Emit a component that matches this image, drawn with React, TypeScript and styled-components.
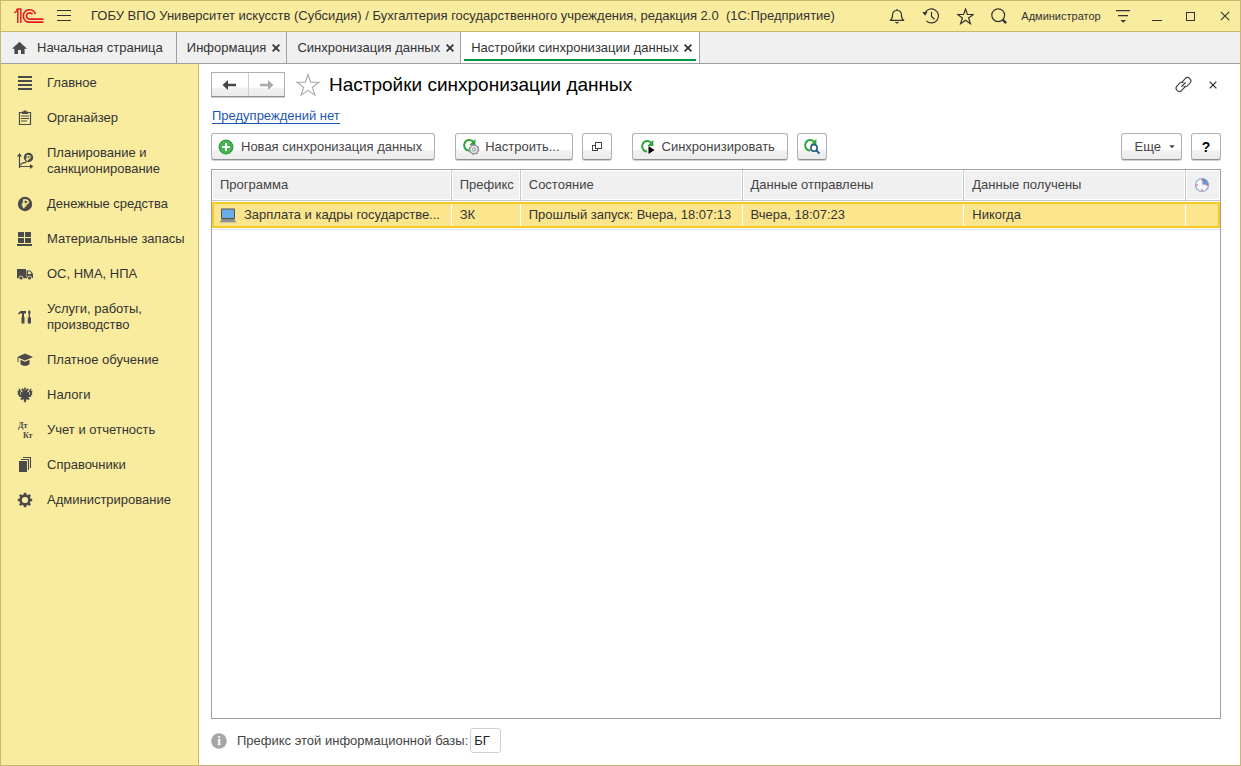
import React from "react";
import styled, { createGlobalStyle, css } from "styled-components";

const GlobalStyle = createGlobalStyle`
  *, *::before, *::after { box-sizing: border-box; }
  body {
    margin: 0;
    font-family: "Liberation Sans", Arial, sans-serif;
    font-size: 13px;
    line-height: 16px;
    color: #333;
    background: #fff;
  }
  button, input { font: inherit; color: inherit; }
  svg { display: block; flex: none; }
`;

const AppWindow = styled.div`
  display: flex;
  flex-direction: column;
  min-height: 100vh;
  border: 1px solid #c9b870;
`;

const bareButton = css`
  display: flex;
  align-items: center;
  justify-content: center;
  padding: 0;
  border: 0;
  background: none;
  cursor: pointer;
`;

/* ---------- title bar ---------- */

const TitleBar = styled.header`
  display: flex;
  align-items: center;
  gap: 4px;
  height: 31px;
  padding-left: 12px;
  background: #faec9e;
  border-bottom: 1px solid #c9b870;
`;

const IconButton = styled.button`
  ${bareButton}
  width: 30px;
  height: 30px;
`;

const WindowTitle = styled.div`
  flex: 1;
  min-width: 0;
  padding-left: 8px;
  white-space: pre;
  overflow: hidden;
  text-overflow: ellipsis;
`;

const UserButton = styled.button`
  ${bareButton}
  width: 86px;
  height: 30px;
  font-size: 11px;
`;

/* ---------- tabs ---------- */

const TabBar = styled.nav`
  display: flex;
  height: 32px;
  background: #f0f0f0;
  border-bottom: 1px solid #a0a0a0;
`;

const Tab = styled.div<{ $active?: boolean }>`
  display: flex;
  align-items: center;
  gap: 4px;
  padding: 0 5px 0 10px;
  border-right: 1px solid #a0a0a0;
  background: ${(p) =>
    p.$active
      ? "linear-gradient(#009646, #009646) 3px 27px / calc(100% - 6px) 2px no-repeat #fff"
      : "transparent"};
`;

const TabButton = styled.button`
  ${bareButton}
  gap: 9px;
  height: 100%;
  white-space: nowrap;
`;

const HomeTab = styled(Tab)`
  padding-right: 13px;
`;

const CloseButton = styled.button`
  ${bareButton}
  width: 11px;
  height: 16px;
`;

/* ---------- body ---------- */

const Body = styled.div`
  display: flex;
  flex: 1;
`;

const Sidebar = styled.nav`
  flex: none;
  width: 198px;
  padding-top: 1px;
  background: #faec9e;
  border-right: 1px solid #c9b870;
`;

const SideLink = styled.a`
  display: flex;
  align-items: center;
  gap: 13px;
  padding: 10px 12px 9px 15px;
  color: #333;
  text-decoration: none;
  svg {
    margin: -1px 0;
  }
`;

const Main = styled.main`
  display: flex;
  flex: 1;
  flex-direction: column;
  min-width: 0;
  padding: 8px 19px 12px 12px;
`;

const PageHeader = styled.div`
  display: flex;
  align-items: center;
  height: 25px;
`;

const raised = css`
  background: linear-gradient(#fff 0, #fff 60%, #f1f1f1 68%, #ececec 100%);
  border: 1px solid #b0b0b0;
  border-bottom-color: #8e8e8e;
  box-shadow: 0 1px 0 #d0d0d0;
`;

const NavGroup = styled.div`
  ${raised}
  display: flex;
  width: 74px;
  height: 25px;
`;

const NavButton = styled.button`
  ${bareButton}
  flex: 1;
  & + & {
    border-left: 1px solid #cfcfcf;
  }
`;

const StarButton = styled.button`
  ${bareButton}
  width: 24px;
  margin: 0 9px 0 11px;
`;

const PageTitle = styled.h1`
  flex: 1;
  margin: 0;
  font-size: 19px;
  line-height: 24px;
  font-weight: 400;
  color: #000;
`;

const HeaderActions = styled.div`
  display: flex;
  gap: 14px;
`;

const HeaderAction = styled.button`
  ${bareButton}
  width: 16px;
  height: 24px;
`;

const WarningLink = styled.a`
  align-self: flex-start;
  margin: 12px 0 9px 1px;
  color: #1d56b0;
  text-decoration: none;
  border-bottom: 1px solid #1d56b0;
  line-height: 14px;
`;

const Toolbar = styled.div`
  display: flex;
  align-items: center;
  margin-bottom: 9px;
`;

const ToolGroup = styled.div<{ $push?: boolean }>`
  display: flex;
  gap: 9px;
  margin-right: ${(p) => (p.$push ? "auto" : "20px")};
  &:last-child {
    margin-right: 0;
  }
`;

const ToolButton = styled.button<{ $square?: boolean }>`
  ${bareButton}
  ${raised}
  gap: 7px;
  height: 27px;
  width: ${(p) => (p.$square ? "30px" : "auto")};
  padding: ${(p) => (p.$square ? "0" : "0 12px 0 6px")};
  border-radius: 3px;
  color: #444;
  white-space: nowrap;
`;

const MoreButton = styled(ToolButton)`
  gap: 8px;
  padding: 0 6px 0 13px;
`;

const HelpButton = styled(ToolButton)`
  color: #000;
  font-size: 14px;
  font-weight: 700;
`;

/* ---------- table ---------- */

const TableBox = styled.div`
  flex: 1;
  border: 1px solid #a0a0a0;
`;

const Table = styled.table`
  width: 100%;
  table-layout: fixed;
  border-collapse: separate;
  border-spacing: 0;
`;

const HeadCell = styled.th<{ $width?: string }>`
  width: ${(p) => p.$width ?? "auto"};
  height: 32px;
  padding: 0 8px 2px;
  background: #f0f0f0;
  border-right: 1px solid #c8c8c8;
  border-bottom: 1px solid #fff;
  box-shadow: inset 0 -1px 0 #c8c8c8, inset 0 -2px 0 #fff, inset 0 0 0 1px #fff;
  font-weight: 400;
  text-align: left;
  color: #444;
  white-space: nowrap;
  &:last-child {
    border-right: 0;
  }
`;

const SelectedRow = styled.tr`
  outline: 2px solid #fbc926;
  outline-offset: -2px;
`;

const Cell = styled.td`
  height: 26px;
  padding: 0 8px;
  background: #fce68d;
  border-right: 1px solid #fff;
  white-space: nowrap;
  &:last-child {
    border-right: 0;
  }
`;

const Program = styled.div`
  display: flex;
  align-items: center;
  gap: 8px;
`;

const RowGap = styled.td`
  height: 2px;
  padding: 0;
  border-bottom: 1px solid #e4e4e4;
`;

/* ---------- footer ---------- */

const Footer = styled.div`
  display: flex;
  align-items: center;
  margin-top: 9px;
`;

const FooterLabel = styled.label`
  margin: 0 2px 0 10px;
  color: #444;
`;

const PrefixInput = styled.input`
  width: 31px;
  height: 25px;
  padding: 0 3px;
  border: 1px solid #d0d0d0;
  border-radius: 3px;
  background: #fff;
  color: #222;
`;

/* ---------- icons ---------- */

const INK = "#4a4a4a";

const Logo = () => (
  <svg width="32" height="16" viewBox="0 0 32 16" fill="none" stroke="#e31b23" strokeWidth="1.7" role="img" aria-label="1С">
    <path d="M1.2 5 4.8 2.2V15M3.3 2 4.9 1H7.8V15" strokeWidth="1.5" />
    <path d="M22.4 6A6.2 6.2 0 1 0 16.4 14.2H30.5" />
    <path d="M19.4 6.4A3.2 3.2 0 1 0 16.4 11.2H30.5" />
  </svg>
);

const Burger = () => (
  <svg width="16" height="14" viewBox="0 0 16 14" fill="#333" shapeRendering="crispEdges">
    <path d="M1 1h14v1H1zM1 6h14v1H1zM1 11h14v1H1z" />
  </svg>
);

const Bell = () => (
  <svg width="16" height="16" viewBox="0 0 16 16" fill="none" stroke="#333" strokeWidth="1.2" strokeLinejoin="round">
    <path d="M8 1v1.4M1.2 12.4c2-1.4 2.4-3 2.4-5.6 0-2.6 1.9-4.3 4.4-4.3s4.4 1.7 4.4 4.3c0 2.6.4 4.2 2.4 5.6z" />
    <path d="M5.6 14h4.8L8 15.7z" fill="#333" stroke="none" />
  </svg>
);

const History = () => (
  <svg width="18" height="16" viewBox="0 0 18 16" fill="none" stroke="#333" strokeWidth="1.2">
    <path d="M3 5.2A7 7 0 1 1 4.4 12.8M9.5 3.8v4.7l3 2.8" />
    <path d="M.3 4.3 5.6 3.8 3.2 7.8z" fill="#333" stroke="none" />
  </svg>
);

const Star = ({ size, color }: { size: number; color: string }) => (
  <svg width={size} height={size} viewBox="0 0 24 24" fill="none" stroke={color} strokeWidth={size > 20 ? 1.1 : 1.7}>
    <path d="M12 1.5 14.7 9.2H23L16.4 14.1 18.9 22.2 12 17.4 5.1 22.2 7.6 14.1 1 9.2H9.3z" />
  </svg>
);

const Search = () => (
  <svg width="16" height="16" viewBox="0 0 16 16" fill="none" stroke="#333">
    <circle cx="7.2" cy="7.2" r="6.4" strokeWidth="1.2" />
    <path d="m11.5 11.5 3.6 3.6" strokeWidth="2.4" />
  </svg>
);

const MenuLines = () => (
  <svg width="15" height="14" viewBox="0 0 15 14" fill="#333">
    <path d="M0 1h14v1.2H0zM2 6h10v1.2H2zM4.5 11h5.5L7.2 13.7z" />
  </svg>
);

const Minimize = () => (
  <svg width="10" height="10" viewBox="0 0 10 10" shapeRendering="crispEdges">
    <path d="M0 9h10v1H0z" fill="#333" />
  </svg>
);

const Maximize = () => (
  <svg width="10" height="10" viewBox="0 0 10 10" shapeRendering="crispEdges">
    <path d="M.5 1.5h8v8h-8z" fill="none" stroke="#333" />
  </svg>
);

const Cross = ({ size, weight }: { size: number; weight: number }) => (
  <svg width={size} height={size} viewBox="0 0 10 10" fill="none" stroke="#333" strokeWidth={weight}>
    <path d="m.8.8 8.4 8.4M9.2.8.8 9.2" />
  </svg>
);

const Home = () => (
  <svg width="17" height="14" viewBox="0 0 17 14" fill={INK}>
    <path d="M8.5.8 16 7.8H13.6V13H10V9H7V13H3.4V7.8H1z" />
  </svg>
);

const Arrow = ({ color, flip }: { color: string; flip?: boolean }) => (
  <svg width="15" height="10" viewBox="0 0 15 10" fill={color}>
    <path d={flip ? "M14.5 5 9 0V3.7H1V6.3H9V10z" : "M.5 5 6 0V3.7H14V6.3H6V10z"} />
  </svg>
);

const Chain = () => (
  <svg width="17" height="17" viewBox="0 0 24 24" fill="none" stroke="#444" strokeWidth="1.7" strokeLinecap="round">
    <path d="M9.5 9 14.5 3.6a4.6 4.6 0 0 1 6.6 6.4l-3.8 3.9a4.5 4.5 0 0 1-4.6 1" />
    <path d="M14.5 15 9.5 20.4a4.6 4.6 0 0 1-6.6-6.4l3.8-3.9a4.5 4.5 0 0 1 4.6-1M9.5 14.5 14.5 9.5" />
  </svg>
);

const PlusCircle = () => (
  <svg width="16" height="16" viewBox="0 0 16 16">
    <circle cx="8" cy="8" r="7" fill="#44b54e" stroke="#23903a" />
    <path d="M7 4h2v3h3v2H9v3H7V9H4V7h3z" fill="#fff" />
  </svg>
);

const syncArc = (
  <>
    <path d="M11.8 4.4A5.3 5.3 0 1 0 7 12.6" fill="none" stroke="#2da53a" strokeWidth="2" />
    <path d="M13.4 1v6H7.4z" fill="#2da53a" />
  </>
);

const SyncGear = () => (
  <svg width="16" height="17" viewBox="0 0 16 17" overflow="visible">
    {syncArc}
    <circle cx="12" cy="11.5" r="4.3" fill="#e4e4e4" stroke="#8b8f94" strokeWidth="1.2" />
    <circle cx="12" cy="11.5" r="4.7" fill="none" stroke="#8b8f94" strokeWidth="1.3" strokeDasharray="1.8 1.89" />
    <circle cx="12" cy="11.5" r="1.5" fill="#fff" stroke="#8b8f94" />
  </svg>
);

const SyncPlay = () => (
  <svg width="16" height="17" viewBox="0 0 16 17">
    <g transform="translate(1 1)">{syncArc}</g>
    <path d="M9.5 8v8l6-4z" fill="#000" />
  </svg>
);

const SyncSearch = () => (
  <svg width="17" height="17" viewBox="0 0 17 17" overflow="visible">
    {syncArc}
    <circle cx="11" cy="10" r="3.2" fill="#fff" stroke="#235a86" strokeWidth="1.6" />
    <path d="m13.3 12.4 3.2 3.2" stroke="#235a86" strokeWidth="2" />
  </svg>
);

const Windows = () => (
  <svg width="10" height="10" viewBox="0 0 10 10" fill="none" stroke="#444" shapeRendering="crispEdges">
    <path d="M3.5.5h6v6h-6zM3 3.5H.5v5h5V7" />
  </svg>
);

const Caret = () => (
  <svg width="6" height="4" viewBox="0 0 6 4">
    <path d="M.3.3h5.4L3 3.2z" fill="#444" />
  </svg>
);

const Clock = () => (
  <svg width="16" height="16" viewBox="0 0 16 16">
    <circle cx="8" cy="8" r="6.5" fill="#f4f8fd" stroke="#8fa9d3" strokeWidth="1.2" />
    <path d="M8 8V1.5A6.5 6.5 0 0 1 14.5 8z" fill="#7590cb" />
    <path d="M8 3v5h4" fill="none" stroke="#dfe8f6" />
    <path d="M7.3 12.3h1.4v1.4H7.3zM2.3 7.3h1.4v1.4H2.3zM7.3 2.3h1.4v1.4H7.3zM12.3 7.3h1.4v1.4h-1.4z" fill="#e0604c" />
  </svg>
);

const Laptop = () => (
  <svg width="16" height="15" viewBox="0 0 16 15">
    <path d="M1.5 1h13v9.5h-13z" fill="#69aee8" stroke="#55504b" />
    <path d="M1.5 11h13L16 13.5V14.5H0V13.5z" fill="#9a9a9a" />
    <path d="M2 11.5h12v1H2z" fill="#777" />
  </svg>
);

const Info = () => (
  <svg width="16" height="16" viewBox="0 0 16 16" aria-hidden="true">
    <circle cx="8" cy="8" r="7.8" fill="#a6a6a6" />
    <text x="8" y="12" fontFamily="Liberation Serif, serif" fontWeight="700" fontSize="13" textAnchor="middle" fill="#fff">i</text>
  </svg>
);

const SideIcon = ({ children }: { children: React.ReactNode }) => (
  <svg width="18" height="18" viewBox="0 0 18 18" fill={INK} aria-hidden="true">
    {children}
  </svg>
);

const sections: { label: string; icon: React.ReactNode }[] = [
  { label: "Главное", icon: <path d="M2 2h14v2H2zM2 6h14v2H2zM2 10h14v2H2zM2 14h14v2H2z" shapeRendering="crispEdges" /> },
  {
    label: "Органайзер",
    icon: (
      <>
        <path d="M3.5 3.5h11v12h-11z" fill="none" stroke={INK} strokeWidth="1.2" />
        <path d="M6 2.5h1.6V1.5h2.8v1h1.6V5H6zM5 6.5h8v1H5zM5 9h8v1H5zM5 11.5h6v1H5z" />
      </>
    ),
  },
  {
    label: "Планирование и санкционирование",
    icon: (
      <>
        <path d="M3.5 3v13M3 14.5h13" fill="none" stroke={INK} strokeWidth="1.2" />
        <path d="M3.5 1 6 4.5H1zM17.5 14.5 14 12v5z" />
        <path d="M4 13 6.5 11l3-.5 2-2" fill="none" stroke={INK} strokeWidth="1.3" />
        <circle cx="12.5" cy="5.5" r="4.7" />
        <text x="12.5" y="8.500" fontFamily="Liberation Sans, sans-serif" fontWeight="700" fontSize="8" textAnchor="middle" fill="#faec9e">₽</text>
      </>
    ),
  },
  {
    label: "Денежные средства",
    icon: (
      <>
        <circle cx="9" cy="9" r="7.2" />
        <text x="9" y="13" fontFamily="Liberation Sans, sans-serif" fontWeight="700" fontSize="12" textAnchor="middle" fill="#faec9e">₽</text>
      </>
    ),
  },
  { label: "Материальные запасы", icon: <path d="M2 2h6v5H2zM9 2h6v5H9zM2 8h6v5H2zM9 8h6v5H9zM1 14h15v2H1z" shapeRendering="crispEdges" /> },
  {
    label: "ОС, НМА, НПА",
    icon: (
      <>
        <path d="M1 4h9v8H1zM10.5 5.5h4L17 9v4h-6.5zM1 12h12v1.2H1z" />
        <path d="M12 6.5h2L15.5 9H12z" fill="#faec9e" />
        <circle cx="5" cy="13" r="2" stroke="#faec9e" strokeWidth=".8" />
        <circle cx="13.5" cy="13" r="2" stroke="#faec9e" strokeWidth=".8" />
      </>
    ),
  },
  {
    label: "Услуги, работы, производство",
    icon: <path d="M2 5.500 4.500 3H10v2.500H8V9H8.500v6.500h-3V9H6V5.500H4L3 6.500zM12.500 2.500h1.600l.6 2-.7 1.500v3.500h1V15q0 .8-1.700.8T11.700 15V9.500h1V6L12 4.500z" />,
  },
  {
    label: "Платное обучение",
    icon: <path d="M9 2.500 17 6 9 9.500 2.500 6.700V11H1.500V6zM4.500 8.800 9 10.800l4.500-2v4.500Q11.500 15 9 15t-4.500-1.700z" />,
  },
  {
    label: "Налоги",
    icon: (
      <>
        <path d="M9 1 10 2.5 9.5 4.5 11 2.5 13 3 12 4.5 11 6.5 13 5.5 14 3 15.5 2.5 15 5 16.5 4.5 16 7 16.5 8 15 9.5 15.5 10.5 13.5 11 12 11 14 13 12 14 10.5 13 10 15.5 9 16.8 8 15.5 7.5 13 6 14 4 13 6 11 4.5 11 2.5 10.5 3 9.5 1.5 8 2 7 1.5 4.5 3 5 2.5 2.5 4 3 5 5.5 7 6.5 6 4.5 5 3 7 2.5 8.5 4.5 8 2.5z" />
        <path d="M4.5 6v3M13.5 6v3" fill="none" stroke="#faec9e" strokeWidth=".6" />
      </>
    ),
  },
  {
    label: "Учет и отчетность",
    icon: (
      <g fontFamily="Liberation Serif, serif" fontWeight="700" fontSize="8">
        <text x="2" y="7">Дт</text>
        <text x="7" y="17">Кт</text>
      </g>
    ),
  },
  {
    label: "Справочники",
    icon: (
      <>
        <path d="M3 5h8v11H3z" />
        <path d="M5 3.5h7.5V14M7 1.5h7.5V12" fill="none" stroke={INK} strokeWidth="1.1" />
      </>
    ),
  },
  {
    label: "Администрирование",
    icon: (
      <>
        <circle cx="9" cy="9" r="4.4" fill="none" stroke={INK} strokeWidth="2.6" />
        <path d="M7.7 1.8h2.6V4H7.7zM7.7 14h2.6v2.2H7.7zM1.8 7.7H4v2.6H1.8zM14 7.7h2.2v2.6H14z" />
        <path d="M7.7 1.8h2.6V4H7.7zM7.7 14h2.6v2.2H7.7zM1.8 7.7H4v2.6H1.8zM14 7.7h2.2v2.6H14z" transform="rotate(45 9 9)" />
      </>
    ),
  },
];

const tabs = [
  { label: "Информация", active: false },
  { label: "Синхронизация данных", active: false },
  { label: "Настройки синхронизации данных", active: true },
];

export default function App() {
  return (
    <AppWindow>
      <GlobalStyle />
      <TitleBar>
        <Logo />
        <IconButton aria-label="Меню"><Burger /></IconButton>
        <WindowTitle>
          {"ГОБУ ВПО Университет искусств (Субсидия) / Бухгалтерия государственного учреждения, редакция 2.0  (1С:Предприятие)"}
        </WindowTitle>
        <IconButton aria-label="Уведомления"><Bell /></IconButton>
        <IconButton aria-label="История"><History /></IconButton>
        <IconButton aria-label="Избранное"><Star size={17} color="#333" /></IconButton>
        <IconButton aria-label="Поиск"><Search /></IconButton>
        <UserButton>Администратор</UserButton>
        <IconButton aria-label="Сервис"><MenuLines /></IconButton>
        <IconButton aria-label="Свернуть"><Minimize /></IconButton>
        <IconButton aria-label="Развернуть"><Maximize /></IconButton>
        <IconButton aria-label="Закрыть"><Cross size={10} weight={1.1} /></IconButton>
      </TitleBar>

      <TabBar>
        <HomeTab>
          <TabButton><Home />Начальная страница</TabButton>
        </HomeTab>
        {tabs.map((tab) => (
          <Tab key={tab.label} $active={tab.active}>
            <TabButton>{tab.label}</TabButton>
            <CloseButton aria-label={`Закрыть ${tab.label}`}><Cross size={8} weight={2.2} /></CloseButton>
          </Tab>
        ))}
      </TabBar>

      <Body>
        <Sidebar>
          {sections.map((s) => (
            <SideLink key={s.label} href="#">
              <SideIcon>{s.icon}</SideIcon>
              <span>{s.label}</span>
            </SideLink>
          ))}
        </Sidebar>

        <Main>
          <PageHeader>
            <NavGroup>
              <NavButton aria-label="Назад"><Arrow color="#444" /></NavButton>
              <NavButton aria-label="Вперед"><Arrow color="#aaa" flip /></NavButton>
            </NavGroup>
            <StarButton aria-label="В избранное"><Star size={24} color="#a8a8a8" /></StarButton>
            <PageTitle>Настройки синхронизации данных</PageTitle>
            <HeaderActions>
              <HeaderAction aria-label="Ссылка"><Chain /></HeaderAction>
              <HeaderAction aria-label="Закрыть форму"><Cross size={8} weight={1.6} /></HeaderAction>
            </HeaderActions>
          </PageHeader>

          <WarningLink href="#">Предупреждений нет</WarningLink>

          <Toolbar>
            <ToolGroup>
              <ToolButton><PlusCircle />Новая синхронизация данных</ToolButton>
            </ToolGroup>
            <ToolGroup>
              <ToolButton><SyncGear />Настроить...</ToolButton>
              <ToolButton $square aria-label="Открыть в новом окне"><Windows /></ToolButton>
            </ToolGroup>
            <ToolGroup $push>
              <ToolButton><SyncPlay />Синхронизировать</ToolButton>
              <ToolButton $square aria-label="Просмотр состава данных"><SyncSearch /></ToolButton>
            </ToolGroup>
            <ToolGroup>
              <MoreButton>Еще<Caret /></MoreButton>
              <HelpButton $square>?</HelpButton>
            </ToolGroup>
          </Toolbar>

          <TableBox>
            <Table>
              <thead>
                <tr>
                  <HeadCell>Программа</HeadCell>
                  <HeadCell $width="69px">Префикс</HeadCell>
                  <HeadCell $width="22%">Состояние</HeadCell>
                  <HeadCell $width="22%">Данные отправлены</HeadCell>
                  <HeadCell $width="22%">Данные получены</HeadCell>
                  <HeadCell $width="34px" aria-label="Расписание"><Clock /></HeadCell>
                </tr>
              </thead>
              <tbody>
                <SelectedRow>
                  <Cell>
                    <Program>
                      <Laptop />
                      <span>Зарплата и кадры государстве...</span>
                    </Program>
                  </Cell>
                  <Cell>ЗК</Cell>
                  <Cell>Прошлый запуск: Вчера, 18:07:13</Cell>
                  <Cell>Вчера, 18:07:23</Cell>
                  <Cell>Никогда</Cell>
                  <Cell />
                </SelectedRow>
                <tr>
                  <RowGap colSpan={6} />
                </tr>
              </tbody>
            </Table>
          </TableBox>

          <Footer>
            <Info />
            <FooterLabel htmlFor="prefix">Префикс этой информационной базы:</FooterLabel>
            <PrefixInput id="prefix" defaultValue="БГ" />
          </Footer>
        </Main>
      </Body>
    </AppWindow>
  );
}
